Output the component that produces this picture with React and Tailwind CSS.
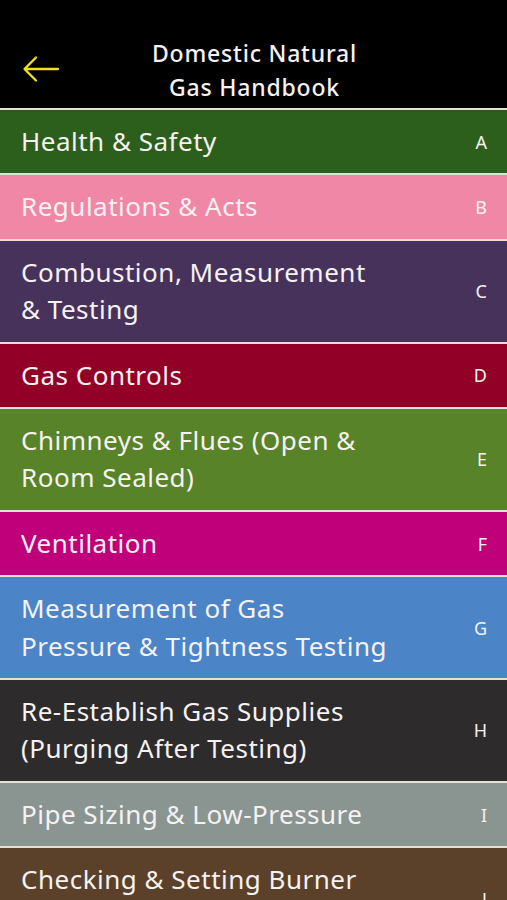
import React from "react";

const rows = [
  { lines: ["Health & Safety"], letter: "A", bg: "bg-[#2c5f1b]" },
  { lines: ["Regulations & Acts"], letter: "B", bg: "bg-[#f087a6]" },
  { lines: ["Combustion, Measurement", "& Testing"], letter: "C", bg: "bg-[#47325c]" },
  { lines: ["Gas Controls"], letter: "D", bg: "bg-[#920027]" },
  { lines: ["Chimneys & Flues (Open &", "Room Sealed)"], letter: "E", bg: "bg-[#588328]" },
  { lines: ["Ventilation"], letter: "F", bg: "bg-[#c0007b]" },
  { lines: ["Measurement of Gas", "Pressure & Tightness Testing"], letter: "G", bg: "bg-[#4b84c7]" },
  { lines: ["Re-Establish Gas Supplies", "(Purging After Testing)"], letter: "H", bg: "bg-[#2d2b2c]" },
  { lines: ["Pipe Sizing & Low-Pressure"], letter: "I", bg: "bg-[#8a9592]" },
  { lines: ["Checking & Setting Burner", "Pressure & Gas Rates"], letter: "J", bg: "bg-[#5b4129]" },
];

export default function App() {
  return (
    <div className="w-[507px] h-[900px] overflow-hidden bg-black font-['Noto_Sans',sans-serif] text-[#f6f2f2]">
      <header className="h-[108px] flex items-start relative bg-black">
        <button className="absolute left-[22px] top-[55px]" aria-label="Back">
          <svg width="38" height="28" viewBox="0 0 38 28" fill="none">
            <path d="M36 14H3M14 2.5L2.5 14L14 25.5" stroke="#f2e01a" strokeWidth="2.3" strokeLinecap="round" strokeLinejoin="round" />
          </svg>
        </button>
        <h1 className="w-full text-center text-[23px] leading-[34px] font-medium tracking-[0.8px] pt-[36px] pl-[2px]">
          Domestic Natural
          <br />
          Gas Handbook
        </h1>
      </header>
      <div className="flex flex-col">
        {rows.map((r) => (
          <div
            key={r.letter}
            className={`${r.bg} border-t-2 border-[#e4e0d4] flex items-center justify-between pl-[21px] pr-[20px] py-[13px]`}
          >
            <div className="text-[26px] leading-[37.4px] tracking-[0.5px]">
              {r.lines.map((l, i) => (
                <div key={i} className="whitespace-nowrap">{l}</div>
              ))}
            </div>
            <div className="text-[18px] leading-none">{r.letter}</div>
          </div>
        ))}
      </div>
    </div>
  );
}
